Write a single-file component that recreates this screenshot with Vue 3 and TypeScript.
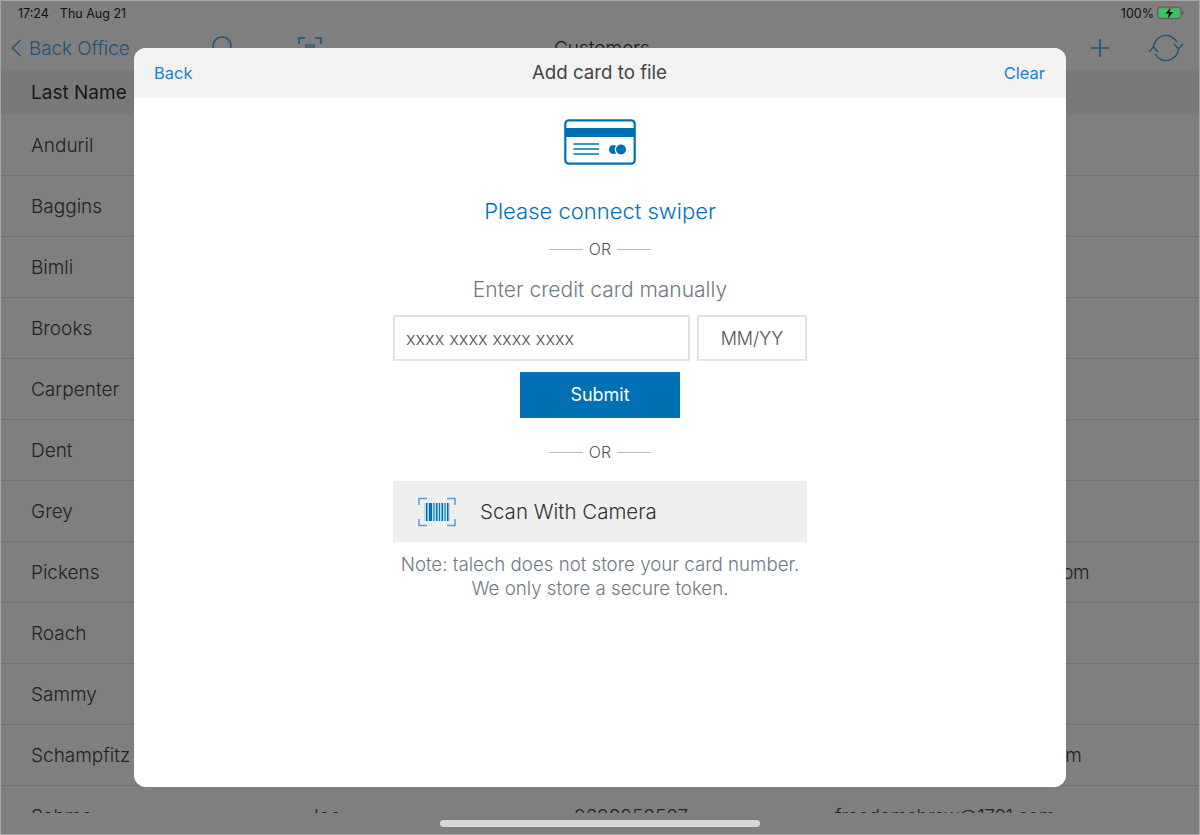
<template>
  <div class="screen">
    <div class="status">
      <span class="time">17:24</span>
      <span class="date">Thu Aug 21</span>
      <span class="spacer"></span>
      <span class="pct">100%</span>
      <svg class="battery" width="28" height="14" viewBox="0 0 28 14">
        <rect x="0.600" y="1.100" width="23.500" height="11.600" rx="3" fill="none" stroke="#5c5c5c" stroke-width="1" />
        <rect x="2" y="2.500" width="20.700" height="8.800" rx="1.600" fill="#36c75c" />
        <path d="M25.200 5v4c.9-.3 1.400-1 1.400-2s-.5-1.700-1.400-2z" fill="#5c5c5c" />
        <path d="M13.600 1.200L8.400 7.800h3.500l-1.300 5 5.500-6.800h-3.600z" fill="#111" />
      </svg>
    </div>

    <div class="nav">
      <div class="back-office">
        <svg width="12" height="20" viewBox="0 0 12 20">
          <path d="M10.500 2L2.500 10l8 8" fill="none" stroke="#3aa8f0" stroke-width="1.600" />
        </svg>
        <span>Back Office</span>
      </div>
      <svg class="nav-search" width="28" height="28" viewBox="0 0 28 28">
        <circle cx="12" cy="12" r="9" fill="none" stroke="#3aa8f0" stroke-width="1.600" />
      </svg>
      <svg class="nav-scan" width="24" height="24" viewBox="0 0 24 24">
        <path d="M1 8V2h6M17 2h6v6" fill="none" stroke="#3aa8f0" stroke-width="1.600" />
        <path d="M7 8h10v6H7z" fill="#3aa8f0" opacity=".6" />
      </svg>
      <span class="nav-title">Customers</span>
      <svg class="nav-plus" width="20" height="20" viewBox="0 0 20 20">
        <path d="M10 1v18M1 10h18" stroke="#3aa8f0" stroke-width="1.600" />
      </svg>
      <svg class="nav-sync" width="36" height="28" viewBox="0 0 36 28">
        <path d="M5.500 14A12.500 12.500 0 0 1 29 8M30.500 14A12.500 12.500 0 0 1 7 20" fill="none" stroke="#3aa8f0" stroke-width="1.400" />
        <path d="M1 18l4.500-5 4.500 5M26 10l4.500 5 4.500-5" fill="none" stroke="#3aa8f0" stroke-width="1.400" />
      </svg>
    </div>

    <div class="table-head">Last Name</div>

    <div class="table">
      <div v-for="row in rows" :key="row.last" class="row">
        <span class="col-last">{{ row.last }}</span>
        <span class="col-first">{{ row.first }}</span>
        <span class="col-phone">{{ row.phone }}</span>
        <span class="col-email">{{ row.email }}</span>
      </div>
    </div>

    <div class="dim"></div>

    <div class="home-bar"></div>

    <div class="modal">
      <div class="modal-head">
        <a class="link">Back</a>
        <span class="modal-title">Add card to file</span>
        <a class="link clear">Clear</a>
      </div>

      <div class="modal-body">
        <svg class="card-icon" width="72" height="46" viewBox="0 0 72 46">
          <rect x="1.300" y="1.300" width="69.400" height="43.400" rx="3.500" fill="none" stroke="#0070b5" stroke-width="2.200" />
          <rect x="1.500" y="9" width="69" height="9" fill="#0070b5" />
          <path d="M9.500 25h25.500M9.500 30h25.500M9.500 35h25.500" stroke="#0070b5" stroke-width="1.500" />
          <circle cx="49.500" cy="30.500" r="4.500" fill="#0070b5" />
          <circle cx="57" cy="30.500" r="6.200" fill="#fff" />
          <circle cx="57" cy="30.500" r="5" fill="#0070b5" />
        </svg>

        <div class="swiper">Please connect swiper</div>

        <div class="or first-or"><i></i><span>OR</span><i></i></div>

        <div class="manual">Enter credit card manually</div>

        <div class="fields">
          <div class="field number">xxxx xxxx xxxx xxxx</div>
          <div class="field expiry">MM/YY</div>
        </div>

        <button type="button" class="submit">Submit</button>

        <div class="or second-or"><i></i><span>OR</span><i></i></div>

        <div class="scan">
          <svg width="38" height="30" viewBox="0 0 38 30">
            <path d="M1 8V1.500h8M29 1.500h8V8M1 22v6.500h8M29 28.500h8V22" fill="none" stroke="#4a9fd6" stroke-width="1.400" />
            <rect x="6" y="6" width="26" height="18" fill="#bcdcf0" />
            <g fill="#0070b5">
              <rect x="8" y="6" width="1.500" height="18" />
              <rect x="11" y="6" width="3" height="18" />
              <rect x="15.500" y="6" width="1" height="18" />
              <rect x="18" y="6" width="1.500" height="18" />
              <rect x="21" y="6" width="1" height="18" />
              <rect x="23.500" y="6" width="1.500" height="18" />
              <rect x="26.500" y="6" width="1" height="18" />
              <rect x="29" y="6" width="1.500" height="18" />
            </g>
          </svg>
          <span>Scan With Camera</span>
        </div>

        <div class="note">
          Note: talech does not store your card number.<br />
          We only store a secure token.
        </div>
      </div>
    </div>
  </div>
</template>

<script setup lang="ts">
type Customer = {
  last: string
  first?: string
  phone?: string
  email?: string
}

const rows: Customer[] = [
  { last: 'Anduril' },
  { last: 'Baggins' },
  { last: 'Bimli' },
  { last: 'Brooks' },
  { last: 'Carpenter' },
  { last: 'Dent' },
  { last: 'Grey' },
  { last: 'Pickens', email: 'mountains.pickens@1701.com' },
  { last: 'Roach' },
  { last: 'Sammy' },
  { last: 'Schampfitz', email: 'schampfitzmaster@1701.com' },
  { last: 'Sahme', first: 'Joe', phone: '2628258507', email: 'freedomabrew@1701.com' }
]
</script>

<style>
html,
body {
  margin: 0;
  background: #fff;
}
</style>

<style scoped>
.screen {
  position: relative;
  width: 1200px;
  height: 835px;
  overflow: hidden;
  background: #fff;
  font-family: Inter, "Noto Sans", sans-serif;
  color: #444;
}

/* status bar stays above the dimmed layer, the battery is still bright green */
.status {
  position: relative;
  z-index: 1;
  display: flex;
  align-items: center;
  height: 26px;
  padding: 0 15px 0 18px;
  font-size: 12.500px;
  color: #111;
}

.date {
  margin-left: 11px;
}

.spacer {
  flex: 1;
}

.battery {
  margin-left: 3px;
}

.nav {
  display: flex;
  align-items: center;
  height: 44px;
  padding-left: 10px;
}

.back-office {
  display: flex;
  align-items: center;
  gap: 7px;
  width: 200px;
  font-size: 18.800px;
  font-weight: 300;
  color: #3aa8f0;
}

.nav-scan {
  margin-left: 60px;
}

.nav-title {
  margin-left: 232px;
  font-size: 19px;
  font-weight: 300;
  color: #333;
}

.nav-plus {
  margin-left: 440px;
}

.nav-sync {
  margin-left: 38px;
}

.table-head {
  height: 45px;
  line-height: 45px;
  padding-left: 31px;
  background: #f2f2f2;
  font-size: 19px;
  color: #333;
}

.table {
  height: 698px;
  overflow: hidden;
}

.row {
  display: flex;
  align-items: center;
  height: 60px;
  border-bottom: 1px solid #e6e6e6;
  font-size: 19px;
  font-weight: 300;
  color: #444;
}

.col-last {
  width: 308px;
  padding-left: 31px;
  box-sizing: border-box;
  flex: none;
}

.col-first {
  width: 266px;
  flex: none;
}

.col-phone {
  width: 261px;
  flex: none;
}

.col-email {
  letter-spacing: -0.4px;
  white-space: nowrap;
}

.dim {
  position: absolute;
  inset: 0;
  background: rgba(0, 0, 0, 0.5);
  box-shadow: inset 0 0 0 1px #a6a6a6;
}

.home-bar {
  position: absolute;
  left: 440px;
  top: 820px;
  width: 320px;
  height: 7px;
  border-radius: 4px;
  background: #d6d6d6;
}

.modal {
  position: absolute;
  left: 134px;
  top: 48px;
  width: 932px;
  height: 739px;
  border-radius: 12px;
  overflow: hidden;
  background: #fff;
}

.modal-head {
  display: grid;
  grid-template-columns: 1fr auto 1fr;
  align-items: center;
  box-sizing: border-box;
  height: 50px;
  padding: 0 21px 1px 20px;
  background: #f2f2f2;
}

.link {
  font-size: 16.500px;
  color: #1a82c4;
}

.clear {
  text-align: right;
}

.modal-title {
  font-size: 18.700px;
  color: #444;
}

.modal-body {
  display: flex;
  flex-direction: column;
  align-items: center;
}

.card-icon {
  margin-top: 21px;
}

.swiper {
  margin-top: 32px;
  font-size: 22px;
  font-weight: 300;
  line-height: 28px;
  color: #0070b5;
}

.or {
  display: flex;
  align-items: center;
  gap: 6px;
  font-size: 16px;
  font-weight: 300;
  color: #555;
}

.or i {
  display: block;
  width: 34px;
  height: 1px;
  background: #bbb;
}

.first-or {
  margin-top: 14px;
}

.manual {
  margin-top: 17px;
  font-size: 21px;
  font-weight: 300;
  line-height: 28px;
  color: #6f7a86;
}

.fields {
  display: flex;
  gap: 7px;
  margin-top: 11px;
}

.field {
  box-sizing: border-box;
  height: 46px;
  line-height: 43px;
  border: 2px solid #e2e2e2;
  font-size: 18px;
  font-weight: 300;
  color: #555;
}

.number {
  width: 297px;
  padding-left: 11px;
}

.expiry {
  width: 110px;
  text-align: center;
}

.submit {
  width: 160px;
  height: 46px;
  margin-top: 11px;
  padding: 0 0 2px;
  border: none;
  border-radius: 0;
  background: #0070b5;
  color: #fff;
  font-family: inherit;
  font-size: 18px;
  font-weight: 400;
}

.second-or {
  margin-top: 24px;
}

.scan {
  display: flex;
  align-items: center;
  gap: 24px;
  box-sizing: border-box;
  width: 414px;
  height: 61px;
  margin-top: 19px;
  padding-left: 25px;
  background: #efefef;
  font-size: 20.500px;
  font-weight: 300;
  color: #333;
}

.note {
  margin-top: 11px;
  font-size: 18.700px;
  font-weight: 300;
  line-height: 24px;
  text-align: center;
  color: #6f7a86;
}
</style>
